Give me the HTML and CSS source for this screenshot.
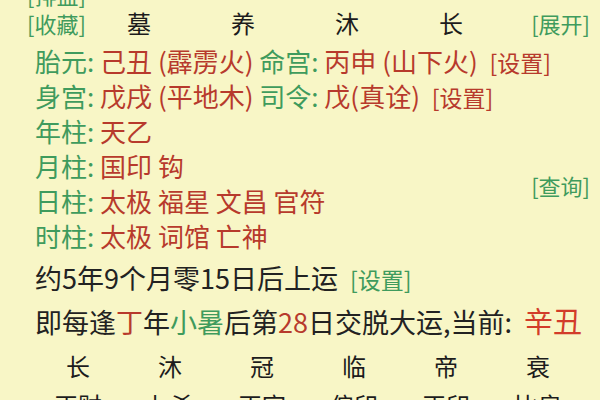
FILE: index.html
```html
<!DOCTYPE html>
<html lang="zh">
<head>
<meta charset="utf-8">
<link rel="stylesheet" href="styles.css">
</head>
<body>
<div class="page">
  <div class="toprow"><span class="g link">[排盘]</span></div>
  <div class="head">
    <span class="g link">[收藏]</span>
    <span class="col">墓</span>
    <span class="col">养</span>
    <span class="col">沐</span>
    <span class="col">长</span>
    <span class="g link end">[展开]</span>
  </div>
  <div class="line"><span class="g">胎元:</span> <span class="r">己丑 (霹雳火)</span> <span class="g">命宫:</span> <span class="r">丙申 (山下火)</span> <span class="r set">[设置]</span></div>
  <div class="line"><span class="g">身宫:</span> <span class="r">戊戌 (平地木)</span> <span class="g">司令:</span> <span class="r">戊(真诠)</span> <span class="r set">[设置]</span></div>
  <div class="pillars">
    <div class="plist">
      <div class="line"><span class="g">年柱:</span> <span class="r">天乙</span></div>
      <div class="line"><span class="g">月柱:</span> <span class="r">国印 钩</span></div>
      <div class="line"><span class="g">日柱:</span> <span class="r">太极 福星 文昌 官符</span></div>
      <div class="line"><span class="g">时柱:</span> <span class="r">太极 词馆 亡神</span></div>
    </div>
    <span class="g link query">[查询]</span>
  </div>
  <div class="yun">约5年9个月零15日后上运 <span class="g set">[设置]</span></div>
  <div class="yun2">即每逢<span class="r">丁</span>年<span class="g">小暑</span>后第<span class="r">28</span>日交脱大运,当前: <span class="cur">辛丑</span></div>
  <div class="grid">
    <span>长</span><span>沐</span><span>冠</span><span>临</span><span>帝</span><span>衰</span>
    <span>正财</span><span>七杀</span><span>正官</span><span>偏印</span><span>正印</span><span>比肩</span>
  </div>
</div>
</body>
</html>
```

FILE: styles.css
```css
html, body {
  margin: 0;
  padding: 0;
  background: #f8f6c6;
  overflow: hidden;
}
body {
  width: 600px;
  height: 400px;
  font-family: "Noto Sans CJK SC", "Noto Sans", sans-serif;
  color: #222;
}
.page {
  width: 600px;
}
.g { color: #3f9b5d; }
.r { color: #b73a2c; }
.link { font-size: 22px; }
.set { font-size: 23px; }
.toprow {
  margin-top: -20px;
  height: 30px;
  line-height: 28px;
  padding-left: 27px;
}
.head {
  display: grid;
  grid-template-columns: 60px repeat(4, 104px) 1fr;
  align-items: center;
  padding-left: 27px;
  padding-right: 10px;
  height: 26px;
  line-height: 24px;
  margin-bottom: 7px;
}
.head .col {
  text-align: center;
  font-size: 24px;
  color: #1c1c1c;
}
.head .end {
  text-align: right;
}
.line {
  font-size: 26px;
  line-height: 35px;
  height: 35px;
  padding-left: 35px;
  white-space: nowrap;
}
.line .set { margin-left: 6px; }
.pillars {
  display: flex;
  align-items: center;
  justify-content: space-between;
  padding-right: 10px;
}
.pillars .query {
  margin-top: 4px;
}
.yun {
  font-size: 27px;
  line-height: 50px;
  height: 50px;
  padding-left: 35px;
  white-space: nowrap;
}
.yun .set { margin-left: 6px; }
.yun2 {
  font-size: 27px;
  line-height: 34px;
  height: 34px;
  padding-left: 35px;
  white-space: nowrap;
}
.cur {
  color: #d23c2a;
  font-size: 29px;
  margin-left: 6px;
}
.grid {
  display: grid;
  grid-template-columns: repeat(6, 92px);
  grid-auto-rows: 39px;
  padding-left: 32px;
  margin-top: 9px;
  font-size: 24px;
  line-height: 39px;
  color: #1c1c1c;
}
.grid span { text-align: center; }
```
